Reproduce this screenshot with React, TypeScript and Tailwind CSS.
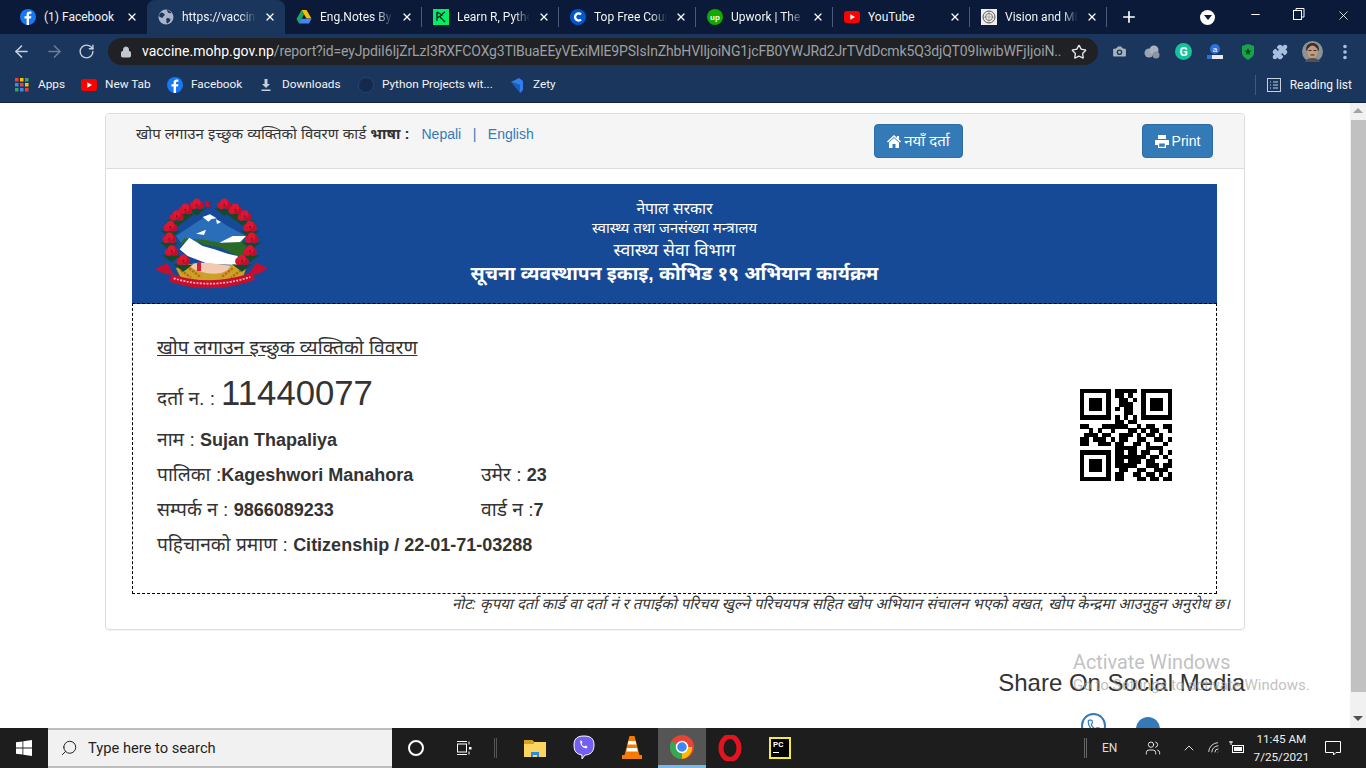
import React from "react";
import { ArrowLeft, ArrowRight, RotateCw, Lock, Star, Plus, X, Minus, ChevronUp, Search, Puzzle, Camera, Users, Wifi, Phone } from "lucide-react";

const UI = "font-['Roboto','Noto_Sans',sans-serif]";
const DEV = "font-['Liberation_Sans','Noto_Sans_Devanagari','Noto_Sans','Lohit_Devanagari','FreeSans',sans-serif]";

const FbIcon = ({ s = 16 }: { s?: number }) => (
  <svg width={s} height={s} viewBox="0 0 16 16"><circle cx="8" cy="8" r="8" fill="#1877f2" /><path d="M9 16V9.6h2l.4-2.4H9V6c0-.8.3-1.2 1.2-1.2h1.2V2.7C11 2.6 10.400 2.500 9.700 2.500 7.800 2.500 6.600 3.600 6.600 5.600v1.600H4.500v2.400h2.100V16z" fill="#fff" /></svg>
);
const YtIcon = () => (
  <svg width="16" height="16" viewBox="0 0 16 16"><rect x="0" y="2" width="16" height="12" rx="3" fill="#f00" /><path d="M6.300 5.300v5.400L11 8z" fill="#fff" /></svg>
);
const Globe = () => (
  <svg width="16" height="16" viewBox="0 0 16 16"><circle cx="8" cy="8" r="7.500" fill="#aab4c8" /><path d="M3 3.500c2 .3 3 1.200 4 2.500-1 .8-2 1.500-2.500 3C3 8.500 1.500 8 1 7c.2-1.500 1-2.700 2-3.500zM9 9c1.500 0 3 .5 3.500 1.500-.5 2-2 3.500-3.500 4-.5-1-.8-1.800-.5-2.800C8 11 8 10 9 9zM9 1c1.500.2 3.500 1.200 4.500 3-1.500.5-2.500 0-3.500-.5C9.500 2.500 9 2 9 1z" fill="#1b365d" /></svg>
);
const Drive = () => (
  <svg width="16" height="16" viewBox="0 0 16 16"><path d="M5.500 1h5l5 8.500h-5z" fill="#fbbc04" /><path d="M5.500 1L.5 10l2.500 4.500L8 5.500z" fill="#1fa463" /><path d="M5.300 9.700h10.200L13 14.500H3z" fill="#4285f4" /></svg>
);
const DC = () => (
  <svg width="16" height="16" viewBox="0 0 16 16"><rect width="16" height="16" fill="#03ef62" /><path d="M4 3v9M4 3l5 3-5 3M9 5l3-2M7 8l5 5" stroke="#05192d" strokeWidth="1.300" fill="none" /></svg>
);
const Cc = () => (
  <svg width="16" height="16" viewBox="0 0 16 16"><circle cx="8" cy="8" r="8" fill="#0056d2" /><path d="M11 5.500A3.500 3.500 0 1 0 11 10.500" stroke="#fff" strokeWidth="2.400" fill="none" /></svg>
);
const Up = () => (
  <svg width="16" height="16" viewBox="0 0 16 16"><circle cx="8" cy="8" r="8" fill="#14a800" /><text x="8" y="10.500" textAnchor="middle" fontSize="8" fontWeight="700" fill="#fff" fontFamily="Liberation Sans">up</text></svg>
);
const Vision = () => (
  <svg width="16" height="16" viewBox="0 0 16 16"><rect width="16" height="16" fill="#eee" /><circle cx="8" cy="8" r="6" fill="none" stroke="#555" /><circle cx="8" cy="8" r="3.500" fill="none" stroke="#777" /><path d="M8 2v12M2 8h12" stroke="#888" strokeWidth=".6" /></svg>
);

const tabs = [
  { icon: <FbIcon />, t: "(1) Facebook", w: "w-[138px]", plain: true },
  { icon: <Globe />, t: "https://vaccine.mohp", active: true, w: "w-[138px]" },
  { icon: <Drive />, t: "Eng.Notes By Sujan", w: "w-[137px]" },
  { icon: <DC />, t: "Learn R, Python & Data", w: "w-[137px]" },
  { icon: <Cc />, t: "Top Free Courses", w: "w-[137px]" },
  { icon: <Up />, t: "Upwork | The World", w: "w-[137px]" },
  { icon: <YtIcon />, t: "YouTube", w: "w-[137px]", plain: true },
  { icon: <Vision />, t: "Vision and Mission", w: "w-[137px]" },
];

const qr = [
  "111111101111101111111",
  "100000101101001000001",
  "101110100110101011101",
  "101110100111001011101",
  "101110101011001011101",
  "100000100011001000001",
  "111111101010101111111",
  "000000001101100000000",
  "110001111110010110011",
  "001010010001101011001",
  "011101100111010110100",
  "110111010110011001101",
  "110011101100110100010",
  "000000001111100111100",
  "111111101101101100101",
  "100000101111111011010",
  "101110101101110110001",
  "101110101111100111011",
  "101110100110011001110",
  "100000101100110110101",
  "111111101100011011011",
];

function QR() {
  return (
    <svg width="92" height="92" viewBox="0 0 21 21" shapeRendering="crispEdges" className="block">
      {qr.flatMap((row, y) => row.split("").map((c, x) => (c === "1" ? <rect key={x + "-" + y} x={x} y={y} width="1.02" height="1.02" fill="#000" /> : null)))}
    </svg>
  );
}

function Emblem() {
  const fl = [[197,70],[280,70],[163,85],[313,85],[137,105],[341,105],[118,137],[357,137],[115,172],[362,172],[122,210],[357,210],[157,238],[333,238]];
  return (
    <svg width="120" height="110" viewBox="60 45 360 330" className="block">
      <defs><filter id="b"><feGaussianBlur stdDeviation="1.200" /></filter></defs>
      <g filter="url(#b)">
        <path d="M135 165L190 128 235 100 290 135 345 165 330 185 150 185z" fill="#2a6db8" />
        <path d="M215 108l22-8 20 12-15 2-10 8zM195 158l30-12-6 16zM255 115l15 8-12 6zM265 185l40-20 40 0-20 20z" fill="#fff" />
        <path d="M145 195L160 172 220 176 270 186 345 182 345 215 325 228 270 200 215 190 180 172z" fill="#2a6a26" />
        <path d="M146 205L175 170 215 195 250 205 290 218 320 225 318 252 230 248 170 225z" fill="#fff" />
        <path d="M135 262L160 250 320 252 345 262 335 292 240 305 150 292z" fill="#c9a227" />
        <path d="M150 268l30 22M175 262l35 28M330 268l-30 22M305 262l-35 28" stroke="#c2611f" strokeWidth="7" strokeDasharray="7 4" fill="none" />
        <path d="M172 252c20-8 50-8 70-5 28 3 48 6 56 9-8 16-28 22-48 22-28 0-58-8-78-26z" fill="#f3c9b4" />
        <rect x="198" y="244" width="12" height="26" fill="#d31a38" />
        <path d="M72 264L108 246 128 282 100 278z" fill="#c8102e" />
        <path d="M410 262L375 245 352 282 380 280z" fill="#c8102e" />
        <path d="M118 290Q240 332 368 285" stroke="#c8102e" strokeWidth="24" fill="none" />
        <path d="M128 292Q240 326 358 288" stroke="#f5b5b5" strokeWidth="5" strokeDasharray="6 4" fill="none" />
        {fl.map(([x, y], i) => (
          <g key={i}>
            <path d={`M${x - 30} ${y + 12}L${x} ${y + 34}L${x + 30} ${y + 12}L${x + 8} ${y + 14}z`} fill="#174a2a" />
            <circle cx={x - 9} cy={y + 3} r="11.500" fill="#d2122e" />
            <circle cx={x + 9} cy={y + 3} r="11.500" fill="#c40f29" />
            <circle cx={x} cy={y - 6} r="11.500" fill="#dd1733" />
            <circle cx={x} cy={y + 1} r="3" fill="#8c0b20" />
          </g>
        ))}
        <path d="M222 56v24l22-3-12-9 10-2z" fill="#c8102e" stroke="#1e3a8a" strokeWidth="2" />
      </g>
    </svg>
  );
}

const HomeFa = () => (
  <svg width="14" height="13" viewBox="0 0 14 13" fill="#fff"><path d="M7 0L0 6.500l1 1L7 2l6 5.500 1-1-2-1.900V1h-2v1.800zM2 7.500V13h3.500V9h3v4H12V7.500L7 3z" /></svg>
);
const PrintFa = () => (
  <svg width="14" height="13" viewBox="0 0 14 13" fill="#fff" fillRule="evenodd"><path d="M3 0h8v4H3zM1 5h12c.6 0 1 .4 1 1v4h-3v3H3v-3H0V6c0-.6.4-1 1-1zM4.200 8.500v3.300h5.600V8.500z" /></svg>
);

const L = "text-[19.2px]";

export default function App() {
  return (
    <div className={`w-[1366px] h-[768px] overflow-hidden flex flex-col relative bg-white ${UI}`}>
      {/* tab strip */}
      <div className="h-[34px] bg-[#0a1a38] flex items-stretch pl-[9px] text-[12px] text-white shrink-0">
        {tabs.map((t, i) => (
          <div key={i} className={`${t.w} shrink-0 relative flex items-center pl-[11px] pr-[9px] gap-[8px] ${t.active ? "bg-[#1b365d] rounded-t-[8px]" : ""}`}>
            <span className="w-4 h-4 shrink-0 flex">{t.icon}</span>
            <span className={`flex-1 overflow-hidden whitespace-nowrap text-[#f1f3f4] ${t.plain ? "" : "[mask-image:linear-gradient(to_right,black_78%,transparent)]"}`}>{t.t}</span>
            <X size={12} strokeWidth={2.500} className="shrink-0 text-white" />
            {i >= 2 ? <span className="absolute right-0 top-[7px] h-[20px] w-px bg-[#4a5a78]" /> : null}
          </div>
        ))}
        <Plus size={18} strokeWidth={2.200} className="self-center ml-[13px] shrink-0" />
        <div className="ml-[62px] self-center w-[15px] h-[15px] rounded-full bg-white flex items-center justify-center shrink-0">
          <span className="border-x-[4px] border-x-transparent border-t-[5px] border-t-[#0a1a38]" />
        </div>
        <div className="ml-auto flex items-start pt-[8px] pr-[15px] gap-[31px]">
          <Minus size={13} />
          <svg width="12" height="12" viewBox="0 0 12 12" fill="none" stroke="#fff"><rect x=".5" y="2.500" width="8" height="9" /><path d="M3 2.500V.5h8v8.500H8.500" /></svg>
          <X size={15} strokeWidth={1.300} />
        </div>
      </div>
      {/* toolbar */}
      <div className="h-[35px] bg-[#1b365d] flex items-center shrink-0 pl-[12px] text-[#c5cfdd]">
        <ArrowLeft size={19} className="shrink-0" />
        <ArrowRight size={19} className="ml-[14px] text-[#6a7d99] shrink-0" />
        <RotateCw size={17} className="ml-[14px] shrink-0" />
        <div className="ml-[13px] w-[990px] shrink-0 h-[27px] rounded-full bg-[#202124] flex items-center pl-[12px] pr-[11px] text-[14px]">
          <Lock size={12} className="text-[#c4c7cb] shrink-0" fill="#c4c7cb" />
          <div className="ml-[10px] flex-1 overflow-hidden whitespace-nowrap">
            <span className="text-white">vaccine.mohp.gov.np</span>
            <span className="text-[#9aa0a6] tracking-[-0.15px]">/report?id=eyJpdiI6IjZrLzI3RXFCOXg3TlBuaEEyVExiMlE9PSIsInZhbHVlIjoiNG1jcFB0YWJRd2JrTVdDcmk5Q3djQT09IiwibWFjIjoiN...</span>
          </div>
          <Star size={16} className="ml-[10px] text-[#e8eaed] shrink-0" />
        </div>
        <Camera size={17} className="ml-[13px] text-[#aab2bd] shrink-0" fill="#aab2bd" stroke="#1b365d" />
        <svg width="18" height="16" viewBox="0 0 18 16" className="ml-[15px] shrink-0"><circle cx="6" cy="9" r="4.500" fill="#9aa4b2" /><circle cx="11" cy="6" r="4.500" fill="#aab2bd" /><circle cx="13" cy="11" r="3.500" fill="#8a94a2" /></svg>
        <span className="ml-[14px] shrink-0 w-[17px] h-[17px] rounded-full bg-[#15c39a] text-white text-[12px] font-bold flex items-center justify-center">G</span>
        <svg width="16" height="18" viewBox="0 0 16 18" className="ml-[15px] shrink-0"><circle cx="8" cy="6" r="5" fill="#2a73d8" /><text x="8" y="9" fontSize="8" fill="#fff" textAnchor="middle" fontFamily="Liberation Sans">a</text><rect x="0" y="12" width="16" height="4" fill="#e8eaed" /><rect x="0" y="12" width="5" height="4" fill="#2a73d8" /></svg>
        <svg width="14" height="16" viewBox="0 0 14 16" className="ml-[18px] shrink-0"><path d="M1 2l6-2 6 2v7c0 3-3 5-6 7-3-2-6-4-6-7z" fill="#16a34a" /><path d="M7 4l1 2.500 2.500.2-2 1.600.7 2.500L7 9.500l-2.200 1.300.7-2.500-2-1.600L6 6.500z" fill="#0a3d1c" /></svg>
        <Puzzle size={16} className="ml-[17px] text-[#a8c0e0] shrink-0" fill="#a8c0e0" />
        <svg width="21" height="21" viewBox="0 0 21 21" className="ml-[14px] shrink-0"><circle cx="10.500" cy="10.500" r="10.500" fill="#8d9294" /><path d="M4 9c0-5 3-7 6.500-7S17 4 17 9l-1 1-1-3-9 0-1 3z" fill="#3a2f27" /><ellipse cx="10.500" cy="11" rx="5" ry="6.500" fill="#c49a80" /><path d="M6.500 9.500h3M11.500 9.500h3M8.500 14h4" stroke="#3a2f27" /><path d="M3 21c1-3 4-4 7.500-4s6.500 1 7.500 4z" fill="#55504a" /></svg>
        <svg width="4" height="16" viewBox="0 0 4 16" fill="#a8c0e0" className="ml-[20px] shrink-0"><circle cx="2" cy="2.500" r="1.800" /><circle cx="2" cy="8" r="1.800" /><circle cx="2" cy="13.500" r="1.800" /></svg>
      </div>
      {/* bookmarks */}
      <div className="h-[34px] pb-[2px] bg-[#1b365d] flex items-center text-[11.8px] text-[#f1f3f4] shrink-0 border-b border-[#12233f]">
        <div className="ml-[15px] w-[57px] flex items-center gap-[9px]">
          <svg width="14" height="14" viewBox="0 0 14 14">
            {[0, 5, 10].flatMap((y, j) => [0, 5, 10].map((x, i) => <rect key={x + "" + y} x={x} y={y} width="3.500" height="3.500" fill={["#ea4335", "#fbbc04", "#34a853", "#4285f4", "#ea4335", "#fbbc04", "#34a853", "#4285f4", "#ea4335"][j * 3 + i]} />))}
          </svg>
          Apps
        </div>
        <div className="ml-[9px] w-[88px] flex items-center gap-[8px]"><YtIcon />New Tab</div>
        <div className="ml-[-2px] w-[91px] flex items-center gap-[8px]"><FbIcon />Facebook</div>
        <div className="w-[100px] flex items-center gap-[8px]">
          <svg width="16" height="16" viewBox="0 0 16 16" fill="#c5cfdd"><path d="M6.500 2h3v5h2.500L8 11 4 7h2.500zM3.500 12.500h9V14h-9z" /></svg>
          Downloads
        </div>
        <div className="w-[151px] flex items-center gap-[8px]"><span className="w-4 h-4 rounded-full bg-[#15294c] border border-[#24407a]" />Python Projects wit...</div>
        <div className="flex items-center gap-[8px]"><svg width="16" height="16" viewBox="0 0 16 16"><path d="M2 5l8-4 4 3v9l-3 3V8z" fill="#2f80ed" /><path d="M2 5l9 3v8z" fill="#1a5fc0" /></svg>Zety</div>
        <div className="ml-auto flex items-center pr-[14px] text-[12px]">
          <span className="w-px h-[20px] bg-[#44597c] mr-[11px]" />
          <svg width="14" height="14" viewBox="0 0 14 14" fill="none" stroke="#c5cfdd"><rect x=".5" y=".5" width="13" height="13" /><path d="M3 4h1M6 4h5M3 7h1M6 7h5M3 10h1M6 10h5" /></svg>
          <span className="ml-[9px]">Reading list</span>
        </div>
      </div>
      {/* page */}
      <div className="flex-1 min-h-0 flex overflow-hidden">
        <div className={`flex-1 min-w-0 pt-[10px] pl-[105px] pr-[105px] text-[#333] overflow-hidden ${DEV}`}>
          <div className="w-[1140px] h-[517px] border border-[#ddd] rounded-[4px] shadow-[0_1px_1px_rgba(0,0,0,0.05)]">
            <div className="h-[55px] bg-[#f5f5f5] border-b border-[#ddd] rounded-t-[4px] flex items-start relative">
              <div className="pl-[30px] pt-[10px] text-[14px] leading-[20px] w-[768px]">
                <span className="text-[15px]">खोप लगाउन इच्छुक व्यक्तिको विवरण कार्ड <b>भाषा :</b></span>
                <span className="text-[#337ab7] ml-[12px]">Nepali</span>
                <span className="text-[#337ab7] mx-[11.500px]">|</span>
                <span className="text-[#337ab7]">English</span>
              </div>
              <button className="mt-[10px] h-[34px] w-[89px] bg-[#337ab7] border border-[#2e6da4] rounded-[4px] text-white text-[15px] flex items-center justify-center gap-[3px]">
                <HomeFa />नयाँ दर्ता
              </button>
              <button className="mt-[10px] ml-[179px] h-[34px] w-[71px] bg-[#337ab7] border border-[#2e6da4] rounded-[4px] text-white text-[14px] flex items-center justify-center gap-[3px]">
                <PrintFa />Print
              </button>
            </div>
            <div className="pl-[26px] pr-[27px] pt-[15px]">
              <div className="h-[120px] bg-[#164a96] text-white grid grid-cols-[1fr_auto_1fr] items-start">
                <div className="pl-[19px] pt-[12px]"><Emblem /></div>
                <div className="text-center pt-[15px]">
                  <div className="text-[15.700px] leading-[19px]">नेपाल सरकार</div>
                  <div className="text-[14.700px] leading-[20px]">स्वास्थ्य तथा जनसंख्या मन्त्रालय</div>
                  <div className="text-[17.600px] leading-[24px]">स्वास्थ्य सेवा विभाग</div>
                  <div className="text-[19.200px] leading-[24px] font-bold">सूचना व्यवस्थापन इकाइ, कोभिड १९ अभियान कार्यक्रम</div>
                </div>
                <div />
              </div>
              <div className="h-[291px] -mt-[1px] relative border border-dashed border-black flex justify-between pl-[24px] pr-[44px]">
                <div className="pt-[30px]">
                  <div className="text-[19.300px] leading-[28px] underline">खोप लगाउन इच्छुक व्यक्तिको विवरण</div>
                  <div className="text-[18px] leading-[40px] mt-[11px] flex items-baseline"><span className={L}>दर्ता न. :</span><span className="text-[34.700px] ml-[6px]">11440077</span></div>
                  <div className="text-[18px] leading-[35px] h-[35px] mt-[3px]"><span className={L}>नाम : </span><b>Sujan Thapaliya</b></div>
                  <div className="grid grid-cols-[324px_auto] auto-rows-[35px] text-[18px] leading-[35px]">
                    <div><span className={L}>पालिका :</span><b>Kageshwori Manahora</b></div><div><span className={L}>उमेर : </span><b>23</b></div>
                    <div><span className={L}>सम्पर्क न : </span><b>9866089233</b></div><div><span className={L}>वार्ड न :</span><b>7</b></div>
                  </div>
                  <div className="text-[18px] leading-[35px] h-[35px]"><span className={L}>पहिचानको प्रमाण : </span><b>Citizenship / 22-01-71-03288</b></div>
                </div>
                <div className="pt-[85px]"><QR /></div>
              </div>
              <div className="italic text-[15px] leading-[20px] text-right mr-[-13px] whitespace-nowrap">नोट: कृपया दर्ता कार्ड वा दर्ता नं र तपाईंको परिचय खुल्ने परिचयपत्र सहित खोप अभियान संचालन भएको वखत, खोप केन्द्रमा आउनुहुन अनुरोध छ।</div>
            </div>
          </div>
          <div className="mt-[38px] text-[24px] leading-[30px] text-right font-['Liberation_Sans',sans-serif] w-[1140px]">Share On Social Media</div>
          <div className="flex mt-[15px] ml-[976px] gap-[30px] items-start">
            <span className="w-[25px] h-[25px] rounded-full border-2 border-[#337ab7] flex items-center justify-center"><Phone size={14} className="text-[#337ab7]" /></span>
            <span className="w-[24px] h-[24px] mt-[4px] rounded-full bg-[#337ab7]" />
          </div>
        </div>
        {/* scrollbar */}
        <div className="w-[16px] bg-[#f1f1f1] flex flex-col items-center shrink-0">
          <span className="mt-[5px] border-x-[5px] border-x-transparent border-b-[5px] border-b-[#a3a3a3]" />
          <div className="mt-[7px] w-[15px] ml-[1px] h-[572px] bg-[#c1c1c1]" />
          <span className="mt-[24px] border-x-[5px] border-x-transparent border-t-[5px] border-t-[#505050]" />
        </div>
      </div>
      {/* taskbar */}
      <div className="h-[40px] bg-[#1d1d1d] flex items-center shrink-0 text-white">
        <div className="w-[48px] flex justify-center">
          <svg width="16" height="16" viewBox="0 0 16 16" fill="#fff"><path d="M0 2.300l6.500-.9v6.200H0zM7.300 1.300L16 0v7.600H7.300zM0 8.400h6.500v6.200L0 13.700zM7.300 8.400H16V16l-8.700-1.200z" /></svg>
        </div>
        <div className="w-[344px] h-[40px] bg-[#f1f1f1] border-y-2 border-[#bdbdbd] flex items-center pl-[12px] text-[#1f1f1f] text-[14.700px]">
          <Search size={18} className="-scale-x-100" strokeWidth={1.300} />
          <span className="ml-[10px]">Type here to search</span>
        </div>
        <span className="ml-[16px] w-[16px] h-[16px] rounded-full border-[2.500px] border-white" />
        <svg width="16" height="16" viewBox="0 0 16 16" fill="none" stroke="#fff" className="ml-[32px]"><rect x="1.500" y="4" width="9" height="8" /><path d="M1 1.500h10M1 14.500h10M13 1.500v3M13 11.500v3" /><rect x="13" y="7" width="2.500" height="2.500" fill="#fff" stroke="none" /></svg>
        <span className="ml-[22px] w-[3px] h-[20px] border-x border-[#555]" />
        <svg width="22" height="20" viewBox="0 0 22 20" className="ml-[27px]"><path d="M0 2h8l2 2h12v15H0z" fill="#fcd462" /><path d="M0 2h8l2 2v2H0z" fill="#d8a21c" /><path d="M7 14h8v5h-2v-2H9v2H7z" fill="#2a8bd6" /></svg>
        <svg width="22" height="26" viewBox="0 0 22 26" className="ml-[27px]"><path d="M11 1c6 0 10 2 10 9 0 7-4 10-9 10l-3 4v-4C3 19 1 16 1 10 1 3 5 1 11 1z" fill="#7360f2" stroke="#fff" strokeWidth="1" /><path d="M7 6c1-1 2 0 2.500 1.500l-1 1c.5 1.500 1.500 2.500 3 3l1-1c1.500.5 2.500 1.500 1.500 2.500-2 1.500-8-3-6.500-7z" fill="#fff" /></svg>
        <svg width="20" height="26" viewBox="0 0 20 26" className="ml-[27px]"><path d="M7.500 1h5l5 19h-15z" fill="#f57c00" /><path d="M6.500 6h7l1 3.500h-9zM5 13h10l.8 3.500H4.300z" fill="#fff" /><path d="M0 20h20v4H0z" fill="#f57c00" /></svg>
        <div className="ml-[16px] w-[48px] h-[40px] bg-[#555] border-b-[3px] border-[#76b9ed] flex items-center justify-center">
          <svg width="24" height="24" viewBox="0 0 24 24"><circle cx="12" cy="12" r="12" fill="#ea4335" /><path d="M12 12L1.600 6A12 12 0 0 0 12 24z" fill="#34a853" /><path d="M12 12l10.400 0A12 12 0 0 1 12 24z" fill="#fbbc04" /><circle cx="12" cy="12" r="5.500" fill="#4285f4" stroke="#fff" strokeWidth="1.500" /></svg>
        </div>
        <svg width="24" height="26" viewBox="0 0 24 26" className="ml-[12px]"><ellipse cx="12" cy="13" rx="9" ry="11.500" fill="none" stroke="#e3131f" strokeWidth="5" /></svg>
        <div className="ml-[27px] w-[22px] h-[22px] border-[2px] border-[#f6e93b] bg-black flex flex-col pl-[2px] pt-[1px]">
          <span className="text-[8px] leading-[9px] font-bold">PC</span>
          <span className="mt-[3px] w-[6px] h-px bg-white" />
        </div>
        <span className="ml-[293px] w-[3px] h-[20px] border-x border-[#666]" />
        <span className="ml-[15px] text-[12px] text-[#ddd]">EN</span>
        <Users size={16} strokeWidth={1.300} className="ml-[28px]" />
        <ChevronUp size={16} strokeWidth={1.300} className="ml-[20px]" />
        <Wifi size={15} strokeWidth={1.500} className="ml-[10px] -rotate-45 text-[#ddd]" />
        <svg width="16" height="14" viewBox="0 0 16 14" fill="none" stroke="#fff" className="ml-[7px]"><rect x="3.500" y="4.500" width="11" height="7" /><rect x="5" y="6" width="8" height="4" fill="#fff" stroke="none" /><path d="M2 0v4M0 1h4" /></svg>
        <div className="ml-[4px] w-[64px] text-center text-[11.700px] leading-[18px] text-[#eee]">
          <div>11:45 AM</div>
          <div>7/25/2021</div>
        </div>
        <svg width="16" height="16" viewBox="0 0 16 16" fill="none" stroke="#fff" className="ml-[12px]"><path d="M.5 1.500h15v11h-4.500l-2.500 2.500v-2.500H.5z" /></svg>
      </div>
      {/* Windows watermark */}
      <div className={`absolute left-[1073px] top-[651px] pointer-events-none text-[#a5a5a5]/70 ${UI}`}>
        <div className="text-[19.800px] leading-[24px]">Activate Windows</div>
        <div className="text-[15px] leading-[20px] whitespace-nowrap">Go to Settings to activate Windows.</div>
      </div>
    </div>
  );
}
